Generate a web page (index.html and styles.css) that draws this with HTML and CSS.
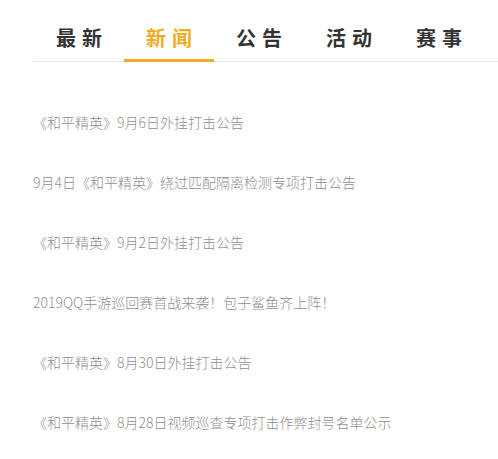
FILE: index.html
```html
<!DOCTYPE html>
<html lang="zh-CN">
<head>
<meta charset="utf-8">
<title>新闻</title>
<link rel="stylesheet" href="styles.css">
</head>
<body>
<div class="panel">
  <div class="tabs">
    <div class="tab"><span>最新</span></div>
    <div class="tab active"><span>新闻</span></div>
    <div class="tab"><span>公告</span></div>
    <div class="tab"><span>活动</span></div>
    <div class="tab"><span>赛事</span></div>
  </div>
  <ul class="news">
    <li>《和平精英》9月6日外挂打击公告</li>
    <li>9月4日《和平精英》绕过匹配隔离检测专项打击公告</li>
    <li>《和平精英》9月2日外挂打击公告</li>
    <li>2019QQ手游巡回赛首战来袭！包子鲨鱼齐上阵！</li>
    <li>《和平精英》8月30日外挂打击公告</li>
    <li>《和平精英》8月28日视频巡查专项打击作弊封号名单公示</li>
  </ul>
</div>
</body>
</html>
```
FILE: styles.css
```css
html, body {
  margin: 0;
  padding: 0;
  background: #ffffff;
}
body {
  font-family: "Noto Sans CJK SC", "Noto Sans", sans-serif;
}
.panel {
  margin-left: 33px;
}
.tabs {
  display: flex;
  height: 61px;
  border-bottom: 1px solid #e6e6e6;
  padding-left: 1px;
}
.tab {
  position: relative;
  width: 90px;
  display: flex;
  justify-content: center;
  padding-top: 27px;
  box-sizing: border-box;
  font-size: 20px;
  line-height: 22px;
  font-weight: bold;
  color: #333333;
}
.tab span {
  letter-spacing: 6px;
  margin-right: -6px;
}
.tab.active {
  color: #f0ac22;
}
.tab.active::after {
  content: "";
  position: absolute;
  left: 0;
  right: 0;
  bottom: -1px;
  height: 3px;
  background: #f0ac22;
}
.news {
  list-style: none;
  margin: 30px 0 0 0;
  padding: 0;
}
.news li {
  font-size: 14px;
  line-height: 60px;
  height: 60px;
  font-weight: 300;
  color: #8f8f8f;
  white-space: nowrap;
}
```
